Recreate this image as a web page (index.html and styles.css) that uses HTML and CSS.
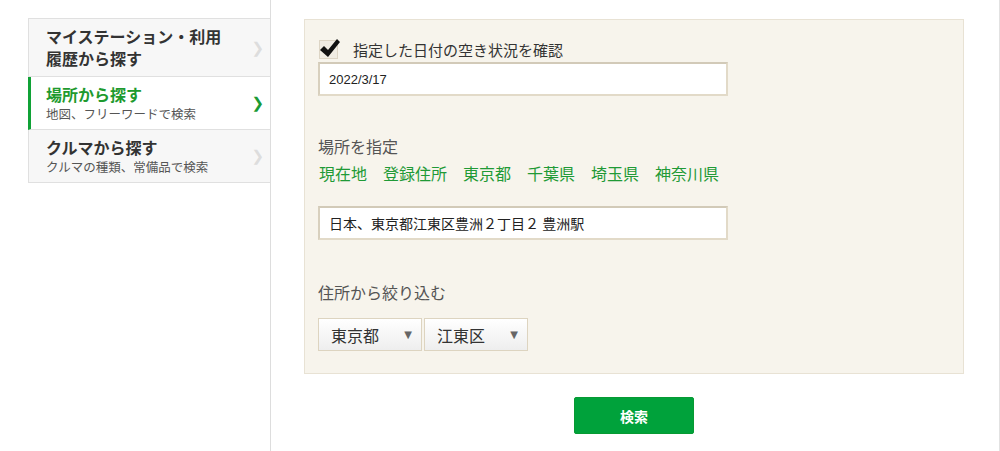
FILE: index.html
```html
<!DOCTYPE html>
<html lang="ja">
<head>
  <meta charset="UTF-8">
  <meta name="viewport" content="width=device-width, initial-scale=1.0">
  <title>検索条件</title>
  <link rel="stylesheet" href="styles.css">
</head>
<body>

  <div class="page">
    <ul class="side-nav">
      <li class="nav-item">
        <span class="nav-title">マイステーション・利用<br>履歴から探す</span>
        <span class="chevron">&#10095;</span>
      </li>
      <li class="nav-item active">
        <span class="nav-title">場所から探す</span>
        <span class="nav-sub">地図、フリーワードで検索</span>
        <span class="chevron">&#10095;</span>
      </li>
      <li class="nav-item">
        <span class="nav-title">クルマから探す</span>
        <span class="nav-sub">クルマの種類、常備品で検索</span>
        <span class="chevron">&#10095;</span>
      </li>
    </ul>

    <div class="main">
      <div class="panel">
        <label class="check-row">
          <span class="check-box">
            <svg width="22" height="21" viewBox="0 0 22 21">
              <path d="M1 12 L5 8 L9 12 L18 1 L21 4 L9 19 Z" fill="#111"/>
            </svg>
          </span>
          <span class="check-label">指定した日付の空き状況を確認</span>
        </label>
        <div class="text-field date-field">2022/3/17</div>

        <p class="section-label first">場所を指定</p>
        <div class="quick-links">
          <a href="#">現在地</a>
          <a href="#">登録住所</a>
          <a href="#">東京都</a>
          <a href="#">千葉県</a>
          <a href="#">埼玉県</a>
          <a href="#">神奈川県</a>
        </div>
        <div class="text-field address-field">日本、東京都江東区豊洲２丁目２ 豊洲駅</div>

        <p class="section-label second">住所から絞り込む</p>
        <div class="selects">
          <div class="select-box">東京都<span class="arrow">&#9660;</span></div>
          <div class="select-box">江東区<span class="arrow">&#9660;</span></div>
        </div>
      </div>

      <div class="actions">
        <button class="search-btn">検索</button>
      </div>
    </div>
  </div>

</body>
</html>
```

FILE: styles.css
```css
body {
  margin: 0;
  padding: 0;
  font-family: "Noto Sans CJK JP", "Liberation Sans", sans-serif;
  color: #333;
  background-color: #ffffff;
}
.page {
  display: flex;
  min-height: 100vh;
}
.side-nav {
  list-style: none;
  margin: 0 0 0 28px;
  padding: 18px 0 0 0;
  width: 243px;
  border-right: 1px solid #dddddd;
  box-sizing: border-box;
}
.nav-item {
  position: relative;
  display: flex;
  flex-direction: column;
  padding: 6px 30px 7px 17px;
  background-color: #f7f7f7;
  border: 1px solid #e0e0e0;
  border-right: none;
  border-top: none;
}
.nav-item:first-child {
  border-top: 1px solid #e0e0e0;
}
.nav-item.active {
  background-color: #ffffff;
  border-left: 3px solid #10a236;
  padding-left: 15px;
}
.nav-title {
  font-size: 16px;
  font-weight: bold;
  line-height: 22px;
  color: #333;
}
.active .nav-title {
  color: #1e9a2e;
}
.nav-sub {
  font-size: 12.5px;
  line-height: 17px;
  color: #555;
}
.chevron {
  position: absolute;
  right: 6px;
  top: 50%;
  transform: translateY(-50%);
  font-size: 15px;
  font-weight: bold;
  color: #dddddd;
  font-family: "DejaVu Sans", sans-serif;
}
.active .chevron {
  color: #1a9a35;
}
.main {
  flex: 1;
  padding: 19px 0 0 33px;
  border-right: 1px solid #e2e2e2;
}
.panel {
  width: 660px;
  box-sizing: border-box;
  background-color: #f7f4ec;
  border: 1px solid #e8e2d4;
  padding: 19px 13px 22px 13px;
}
.check-row {
  display: flex;
  align-items: center;
  height: 20px;
}
.check-box {
  position: relative;
  width: 19px;
  height: 19px;
  margin-left: 1px;
  background-color: #f0ece3;
  border: 1px solid #ddd5c5;
  box-sizing: border-box;
}
.check-box svg {
  position: absolute;
  left: -1px;
  top: -3px;
}
.check-label {
  margin-left: 15px;
  font-size: 15px;
  color: #333;
}
.text-field {
  width: 410px;
  height: 34px;
  box-sizing: border-box;
  background-color: #ffffff;
  border: 2px solid #e2dac8;
  border-top-color: #d2cab8;
  border-left-color: #d8d0be;
  padding: 0 9px;
  display: flex;
  align-items: center;
  color: #222;
}
.date-field {
  margin-top: 3px;
  font-family: "Liberation Sans", sans-serif;
  font-size: 13px;
}
.address-field {
  margin-top: 22px;
  font-size: 14px;
}
.section-label {
  margin: 0;
  font-size: 16px;
  line-height: 20px;
  color: #555;
}
.section-label.first {
  margin-top: 40px;
}
.section-label.second {
  margin-top: 42px;
}
.quick-links {
  display: flex;
  gap: 16px;
  margin-top: 6px;
  padding-left: 1px;
}
.quick-links a {
  font-size: 16px;
  line-height: 22px;
  color: #1f9a36;
  text-decoration: none;
}
.selects {
  display: flex;
  gap: 2px;
  margin-top: 16px;
}
.select-box {
  width: 104px;
  height: 33px;
  box-sizing: border-box;
  border: 1px solid #ddd4c0;
  background: linear-gradient(#ffffff, #eeeeee);
  display: flex;
  align-items: center;
  justify-content: space-between;
  padding: 0 9px 0 12px;
  font-size: 16px;
  color: #333;
}
.arrow {
  font-size: 10px;
  color: #666;
  font-family: "DejaVu Sans", sans-serif;
}
.actions {
  width: 660px;
  display: flex;
  justify-content: center;
  margin-top: 23px;
}
.search-btn {
  width: 120px;
  height: 37px;
  border: 1px solid #079a33;
  border-radius: 2px;
  background-color: #00a23b;
  color: #ffffff;
  font-family: "Noto Sans CJK JP", sans-serif;
  font-size: 14px;
  font-weight: bold;
  cursor: pointer;
}
```
